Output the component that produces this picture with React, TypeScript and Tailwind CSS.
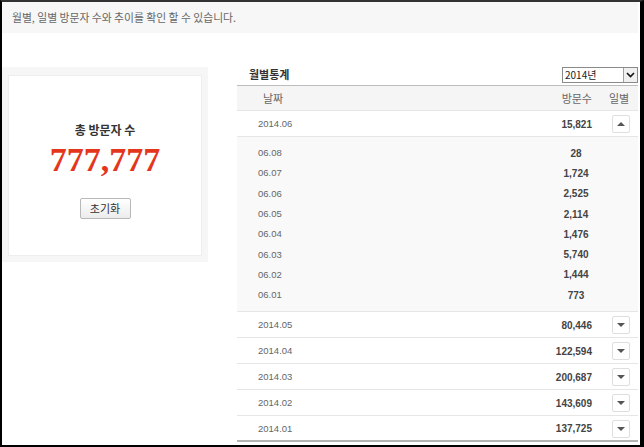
import React from "react";

const KR = "font-['Noto_Sans_CJK_KR','Noto_Sans',sans-serif]";
const NUM = "font-['Liberation_Sans','Noto_Sans_CJK_KR',sans-serif]";

const days = [
    ["06.08", "28"],
    ["06.07", "1,724"],
    ["06.06", "2,525"],
    ["06.05", "2,114"],
    ["06.04", "1,476"],
    ["06.03", "5,740"],
    ["06.02", "1,444"],
    ["06.01", "773"],
];

const months = [
    ["2014.05", "80,446"],
    ["2014.04", "122,594"],
    ["2014.03", "200,687"],
    ["2014.02", "143,609"],
    ["2014.01", "137,725"],
];

const ToggleButton = ({ up }: { up?: boolean }) => (
    <button className="flex h-[18px] w-[18px] items-center justify-center rounded-[2px] border border-[#dedede] bg-white">
        {up
            ? <span className="h-0 w-0 border-x-[4px] border-b-[4px] border-x-transparent border-b-[#555]" />
            : <span className="h-0 w-0 border-x-[4px] border-t-[4px] border-x-transparent border-t-[#555]" />}
    </button>
);

const MonthRow = ({ date, count, up, last }: { date: string; count: string; up?: boolean; last?: boolean }) => (
    <div className={`flex h-[26px] items-center pt-[1px] ${last ? "border-b-2 border-[#b4b4b4]" : "border-b border-[#e6e6e6]"}`}>
        <div className={`flex-1 pl-[21px] text-[9.5px] text-[#666] ${NUM}`}>{date}</div>
        <div className={`w-[80px] pr-[5px] text-right text-[10px] font-bold text-[#444] ${NUM}`}>{count}</div>
        <div className="w-[41px] pl-[15px]">
            <ToggleButton up={up} />
        </div>
    </div>
);

export default function App() {
    return (
        <div className="flex h-[447px] w-[644px] flex-col border-b-2 border-l-2 border-r-4 border-t-2 border-b-black border-l-black border-r-black border-t-[#333] bg-white">
            <div className={`mr-[2px] flex h-[31px] items-center bg-[#f7f7f7] pl-[10px] text-[10.8px] text-[#666] ${KR}`}>
                월별, 일별 방문자 수와 추이를 확인 할 수 있습니다.
            </div>

            <div className="flex items-start">
                {/* total visitors */}
                <div className="mt-[34px] h-[195px] w-[206px] bg-[#f6f6f6] px-[6px] pb-[6px] pt-[8px]">
                    <div className="flex h-full flex-col items-center border border-[#eeeeee] bg-white pt-[47px]">
                        <p className={`text-[12px] font-bold leading-[14px] text-[#333] ${KR}`}>총 방문자 수</p>
                        <p className="mt-[6px] font-['Liberation_Serif',serif] text-[34px] font-bold leading-none text-[#e4361d]">777,777</p>
                        <button className={`mt-[21px] h-[21px] w-[51px] rounded-[2px] border border-[#b8b8b8] bg-gradient-to-b from-white to-[#ececec] text-[11px] text-[#333] ${KR}`}>
                            초기화
                        </button>
                    </div>
                </div>

                {/* monthly table */}
                <div className="ml-[29px] mt-[31px] w-[401px]">
                    <div className="flex h-[22px] items-center justify-between border-b border-[#bdbdbd]">
                        <span className={`pl-[12px] text-[11px] font-bold text-[#333] ${KR}`}>월별통계</span>
                        <div className="flex h-[16px] w-[76px] items-center border border-[#8a8a8a] bg-white">
                            <span className={`flex-1 pl-[2px] text-[10px] leading-none text-[#222] ${KR}`}>2014년</span>
                            <span className="flex h-[14px] w-[14px] items-center justify-center border-l border-[#a0a0a0] bg-[#f0f0f0]">
                                <svg width="9" height="6" viewBox="0 0 9 6">
                                    <path d="M1 1 L4.5 4.5 L8 1" fill="none" stroke="#111" strokeWidth="1.6" />
                                </svg>
                            </span>
                        </div>
                    </div>

                    <div className={`flex h-[25px] items-center border-b border-[#e6e6e6] bg-[#f5f5f5] text-[11px] text-[#666] ${KR}`}>
                        <div className="flex-1 pl-[26px]">날짜</div>
                        <div className="w-[80px] pr-[5px] text-right">방문수</div>
                        <div className="w-[41px] pl-[12px]">일별</div>
                    </div>

                    <MonthRow date="2014.06" count="15,821" up />

                    <div className="border-b border-[#e6e6e6] bg-[#f9f9f9] pb-[6px] pt-[6px]">
                        {days.map(([d, c]) => (
                            <div key={d} className="flex h-[20.3px] items-center">
                                <div className={`flex-1 pl-[21px] text-[9.5px] text-[#666] ${NUM}`}>{d}</div>
                                <div className={`w-[42px] text-center text-[10px] font-bold text-[#444] ${NUM}`}>{c}</div>
                                <div className="w-[41px]" />
                            </div>
                        ))}
                    </div>

                    {months.map(([d, c], i) => (
                        <MonthRow key={d} date={d} count={c} last={i === months.length - 1} />
                    ))}
                </div>
            </div>
        </div>
    );
}
